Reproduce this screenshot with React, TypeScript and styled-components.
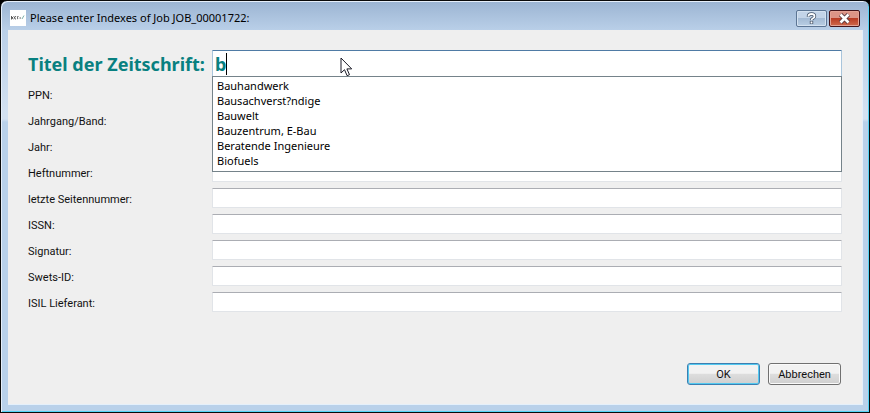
import React, { useState } from "react";
import styled, { createGlobalStyle } from "styled-components";

const GlobalStyle = createGlobalStyle`
  *, *::before, *::after { box-sizing: border-box; }
  body { margin: 0; background: #000; }
`;

const uiFont = `Roboto, "Open Sans", sans-serif`;
const captionFont = `"Noto Sans", "Open Sans", sans-serif`;

const Window = styled.main`
  min-height: 100vh;
  display: flex;
  flex-direction: column;
  padding: 0 6px 7px 7px;
  border: 1px solid #0a0a0a;
  border-radius: 7px 7px 0 0;
  background: linear-gradient(180deg, #9bb4d2 0, #b9cfe8 29px, #d3e1f1 112px, #d3e1f1 118px, #b9d1ea 121px);
  box-shadow: inset 1px 1px 0 #e6effa, inset -1px -1px 0 #55d3f5;
  font-family: ${uiFont};
  color: #111;
`;

const TitleBar = styled.header`
  display: flex;
  align-items: center;
  height: 29px;
  padding: 6px 3px 0 2px;
`;

const AppIcon = styled.svg`
  flex: none;
  width: 16px;
  height: 17px;
  margin-right: 4px;
`;

const Title = styled.h1`
  flex: 1;
  margin: 0;
  font-size: 11px;
  line-height: 15px;
  padding-bottom: 2px;
  font-weight: 400;
  font-family: ${captionFont};
  color: #000;
`;

const CaptionButton = styled.button<{ $danger?: boolean }>`
  display: flex;
  align-items: center;
  justify-content: center;
  width: 31px;
  height: 17px;
  margin-left: 2px;
  padding: 0;
  border: 1px solid ${(p) => (p.$danger ? "#43141a" : "#5c7594")};
  border-radius: 2px;
  box-shadow: inset 0 0 0 1px ${(p) => (p.$danger ? "#e3a294" : "#d4e2f1")};
  background: ${(p) =>
    p.$danger
      ? "linear-gradient(#dc9486 0 45%, #b93c24 50%, #cf6a4c)"
      : "linear-gradient(#c3d4e8 0 45%, #a4bbd5 50%, #b9cee4)"};
`;

const Client = styled.form`
  flex: 1;
  display: flex;
  flex-direction: column;
  border: solid #e4f0fb;
  border-width: 0 1px 1px 0;
  background: #efefef;
  padding: 20px 20px 19px;
`;

const Fields = styled.div`
  display: grid;
  gap: 6px;
`;

const Row = styled.div`
  display: grid;
  grid-template-columns: 184px 1fr;
  align-items: center;
`;

const Label = styled.label<{ $lead?: boolean }>`
  padding-top: ${(p) => (p.$lead ? "0" : "4px")};
  white-space: nowrap;
  font-family: ${(p) => (p.$lead ? captionFont : uiFont)};
  font-size: ${(p) => (p.$lead ? "18px" : "11px")};
  line-height: ${(p) => (p.$lead ? "24px" : "16px")};
  font-weight: ${(p) => (p.$lead ? 700 : 400)};
  color: ${(p) => (p.$lead ? "#088080" : "#111")};
`;

const TextField = styled.input`
  width: 100%;
  height: 20px;
  padding: 0 3px;
  border: 1px solid #e1e4e8;
  border-top-color: #abadb3;
  border-radius: 1px;
  background: #fff;
  font-family: ${uiFont};
  font-size: 11px;
  outline: none;
`;

const Combo = styled.div`
  position: relative;
`;

const LeadField = styled(TextField)`
  display: block;
  height: 28px;
  padding: 0 2px;
  border-color: #4f7ba5 #a9c5dc #b7d9ed #a9c5dc;
  font-family: ${captionFont};
  font-size: 18px;
  font-weight: 700;
  color: #088080;
  caret-color: transparent;
`;

const Caret = styled.span`
  position: absolute;
  left: 14px;
  top: 3px;
  width: 1px;
  height: 22px;
  background: #000;
`;

const Suggestions = styled.ul`
  position: absolute;
  z-index: 1;
  top: 26px;
  left: 0;
  right: 0;
  margin: 0;
  padding: 1px 4px 3px;
  border: 1px solid #75838a;
  background: #fff;
  list-style: none;
  font-family: ${captionFont};
  font-size: 11px;
  line-height: 15px;
  color: #000;
`;

const Pointer = styled.svg`
  position: absolute;
  z-index: 2;
  left: 128px;
  top: 7px;
  width: 13px;
  height: 20px;
`;

const Actions = styled.footer`
  display: flex;
  justify-content: flex-end;
  gap: 8px;
  margin-top: auto;
  padding-top: 20px;
  padding-right: 1px;
`;

const PushButton = styled.button<{ $primary?: boolean }>`
  width: 73px;
  height: 22px;
  padding: 2px 0 0;
  border: 1px solid ${(p) => (p.$primary ? "#3c7fb1" : "#707070")};
  border-radius: 3px;
  background: linear-gradient(#f2f2f2 0 46%, #dddddd 52%, #cfcfcf);
  box-shadow: inset 0 0 0 1px ${(p) => (p.$primary ? "#53c9f0" : "#fafafa")};
  font-family: ${uiFont};
  font-size: 11px;
  line-height: 16px;
  color: #111;
`;

const fields = [
  { id: "ppn", label: "PPN:" },
  { id: "volume", label: "Jahrgang/Band:" },
  { id: "year", label: "Jahr:" },
  { id: "issue", label: "Heftnummer:" },
  { id: "lastpage", label: "letzte Seitennummer:" },
  { id: "issn", label: "ISSN:" },
  { id: "signature", label: "Signatur:" },
  { id: "swets", label: "Swets-ID:" },
  { id: "isil", label: "ISIL Lieferant:" },
];

const journals = [
  "Bauhandwerk",
  "Bausachverst?ndige",
  "Bauwelt",
  "Bauzentrum, E-Bau",
  "Beratende Ingenieure",
  "Biofuels",
];

export default function App() {
  const [title, setTitle] = useState("b");
  return (
    <>
      <GlobalStyle />
      <Window>
        <TitleBar>
          <AppIcon viewBox="0 0 16 17" aria-hidden="true">
            <rect width="16" height="16" fill="#fff" />
            <g fill="none" stroke="#333" strokeWidth="0.8">
              <path d="M1.500 6v3.500M3.500 6.500l-1.500 1.500 1.500 1M6 6.500q-2 0-1.500 1.500t1.500 1M8.500 6.500q-2 0-1 1t-.5 1.500M9.500 8h1.500" />
              <path d="M12 9l2-3.500" stroke="#5b9b93" />
            </g>
          </AppIcon>
          <Title>Please enter Indexes of Job JOB_00001722:</Title>
          <CaptionButton type="button" aria-label="Help">
            <svg width="11" height="13" viewBox="0 0 11 13" fill="none">
              <path d="M2.500 4.800V4q0-2 3-2t3 2.200Q8.500 5.500 7 6.300 5.500 7 5.500 8.200M5.500 9v3" stroke="#46566b" strokeWidth="3.400" />
              <path d="M2.500 4.500V4q0-2 3-2t3 2.200Q8.500 5.500 7 6.300 5.500 7 5.500 8.200M5.500 9.500v2" stroke="#fff" strokeWidth="1.800" />
            </svg>
          </CaptionButton>
          <CaptionButton type="button" aria-label="Close" $danger>
            <svg width="13" height="11" viewBox="0 0 13 11" fill="none">
              <path d="M2.500 1.500l8 8M10.500 1.500l-8 8" stroke="#5a3b40" strokeWidth="4.500" />
              <path d="M2.500 1.500l8 8M10.500 1.500l-8 8" stroke="#fff" strokeWidth="2.600" />
            </svg>
          </CaptionButton>
        </TitleBar>
        <Client onSubmit={(e) => e.preventDefault()}>
          <Fields>
            <Row>
              <Label htmlFor="title" $lead>Titel der Zeitschrift:</Label>
              <Combo>
                <LeadField
                  id="title"
                  autoComplete="off"
                  value={title}
                  onChange={(e) => setTitle(e.target.value)}
                />
                <Caret />
                <Suggestions>
                  {journals.map((name) => (
                    <li key={name}>{name}</li>
                  ))}
                </Suggestions>
                <Pointer viewBox="0 0 13 20" aria-hidden="true">
                  <path d="M1 1v15l3.500-3.300 2.600 6 2.400-1-2.600-5.800h4.800z" fill="#fff" stroke="#1b1b28" />
                </Pointer>
              </Combo>
            </Row>
            {fields.map((f) => (
              <Row key={f.id}>
                <Label htmlFor={f.id}>{f.label}</Label>
                <TextField id={f.id} type="text" />
              </Row>
            ))}
          </Fields>
          <Actions>
            <PushButton type="submit" $primary>OK</PushButton>
            <PushButton type="button">Abbrechen</PushButton>
          </Actions>
        </Client>
      </Window>
    </>
  );
}
